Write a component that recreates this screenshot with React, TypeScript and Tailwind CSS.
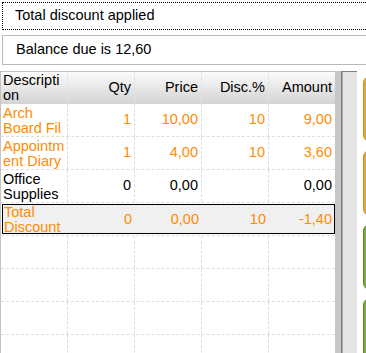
import React from "react";

type Row = {
  d: [string, string];
  q: string;
  p: string;
  disc: string;
  a: string;
  orange: boolean;
};

const rows: Row[] = [
  { d: ["Arch", "Board Fil"], q: "1", p: "10,00", disc: "10", a: "9,00", orange: true },
  { d: ["Appointm", "ent Diary"], q: "1", p: "4,00", disc: "10", a: "3,60", orange: true },
  { d: ["Office", "Supplies"], q: "0", p: "0,00", disc: "", a: "0,00", orange: false },
];

const dash = "border-r border-dashed border-[#dedede]";

function Cells({ r, first }: { r: Row; first: string }) {
  return (
    <>
      <div className={`${first} flex flex-col justify-center pl-[2px] pt-[1px] leading-[15px] overflow-hidden whitespace-nowrap`}>
        <span>{r.d[0]}</span>
        <span>{r.d[1]}</span>
      </div>
      <div className={`${dash} flex items-center justify-end pr-[3px]`}>{r.q}</div>
      <div className={`${dash} flex items-center justify-end pr-[3px]`}>{r.p}</div>
      <div className={`${dash} flex items-center justify-end pr-[3px]`}>{r.disc}</div>
      <div className="flex items-center justify-end pr-[3px]">{r.a}</div>
    </>
  );
}

export default function App() {
  const total: Row = { d: ["Total", "Discount"], q: "0", p: "0,00", disc: "10", a: "-1,40", orange: true };
  return (
    <div className="w-[366px] h-[353px] overflow-hidden bg-white text-black text-[14.5px] font-['Liberation_Sans',Arial,sans-serif]">
      <div className="pt-[2px] pl-[2px] w-[420px]">
        <div className="h-[28px] border border-dotted border-black flex items-center pl-[12px]">
          Total discount applied
        </div>
        <div className="mt-[5px] h-[30px] border border-[#b9b9b9] flex items-center pl-[13px]">
          Balance due is 12,60
        </div>
      </div>
      <div className="mt-[6px] flex h-[282px]">
        <div className="w-[335px] border-l border-t border-[#c4c4c4] flex flex-col shrink-0">
          <div className="h-[32px] shrink-0 grid grid-cols-[67px_67px_67px_67px_66px] bg-gradient-to-b from-[#fcfcfc] to-[#d3d3d3]">
            <div className="border-r border-dashed border-[#e4e4e4] flex flex-col justify-center pl-[2px] leading-[15px]">
              <span>Descripti</span>
              <span>on</span>
            </div>
            <div className="border-r border-dashed border-[#e4e4e4] flex items-center justify-end pr-[3px]">Qty</div>
            <div className="border-r border-dashed border-[#e4e4e4] flex items-center justify-end pr-[3px]">Price</div>
            <div className="border-r border-dashed border-[#e4e4e4] flex items-center justify-end pr-[3px]">Disc.%</div>
            <div className="flex items-center justify-end pr-[3px]">Amount</div>
          </div>
          {rows.map((r, i) => (
            <div
              key={i}
              className={`h-[33px] shrink-0 grid grid-cols-[67px_67px_67px_67px_66px] border-b border-dashed border-[#dedede] ${
                r.orange ? "text-[#ff8c00]" : "text-black"
              }`}
            >
              <Cells r={r} first={dash} />
            </div>
          ))}
          <div className="h-[33px] shrink-0 border-b border-dashed border-[#dedede] pt-[1px] pb-[1px] pl-[1px] text-[#ff8c00]">
            <div className="h-full border border-black bg-[#f0f0f0] grid grid-cols-[65px_67px_67px_67px_65px]">
              <div className="flex flex-col justify-center pl-[1px] leading-[15px] whitespace-nowrap">
                <span>{total.d[0]}</span>
                <span>{total.d[1]}</span>
              </div>
              <div className="flex items-center justify-end pr-[3px]">{total.q}</div>
              <div className="flex items-center justify-end pr-[3px]">{total.p}</div>
              <div className="flex items-center justify-end pr-[3px]">{total.disc}</div>
              <div className="flex items-center justify-end pr-[2px]">{total.a}</div>
            </div>
          </div>
          {[0, 1, 2, 3].map((i) => (
            <div
              key={i}
              className="h-[33px] shrink-0 grid grid-cols-[67px_67px_67px_67px_66px] border-b border-dashed border-[#dedede]"
            >
              <div className={dash}></div>
              <div className={dash}></div>
              <div className={dash}></div>
              <div className={dash}></div>
              <div></div>
            </div>
          ))}
        </div>
        <div className="w-[6px] shrink-0 bg-[#c6c6c6]"></div>
        <div className="w-[16px] shrink-0 border-l border-t border-[#7f7f7f] bg-[#e5e5e5]">
          <div className="h-full border-l border-[#a9a9a9]"></div>
        </div>
        <div className="w-[6px] shrink-0"></div>
        <div className="flex flex-col gap-[8px] pt-[5px] shrink-0">
          <div className="w-[40px] h-[66px] shrink-0 rounded-[7px] border border-[#c49320] bg-[#dbab38]"></div>
          <div className="w-[40px] h-[66px] shrink-0 rounded-[7px] border border-[#c49320] bg-[#dbab38]"></div>
          <div className="w-[40px] h-[66px] shrink-0 rounded-[7px] border border-[#5b8a24] bg-[#80aa40]"></div>
          <div className="w-[40px] h-[66px] shrink-0 rounded-[7px] border border-[#5b8a24] bg-[#80aa40]"></div>
        </div>
      </div>
    </div>
  );
}
